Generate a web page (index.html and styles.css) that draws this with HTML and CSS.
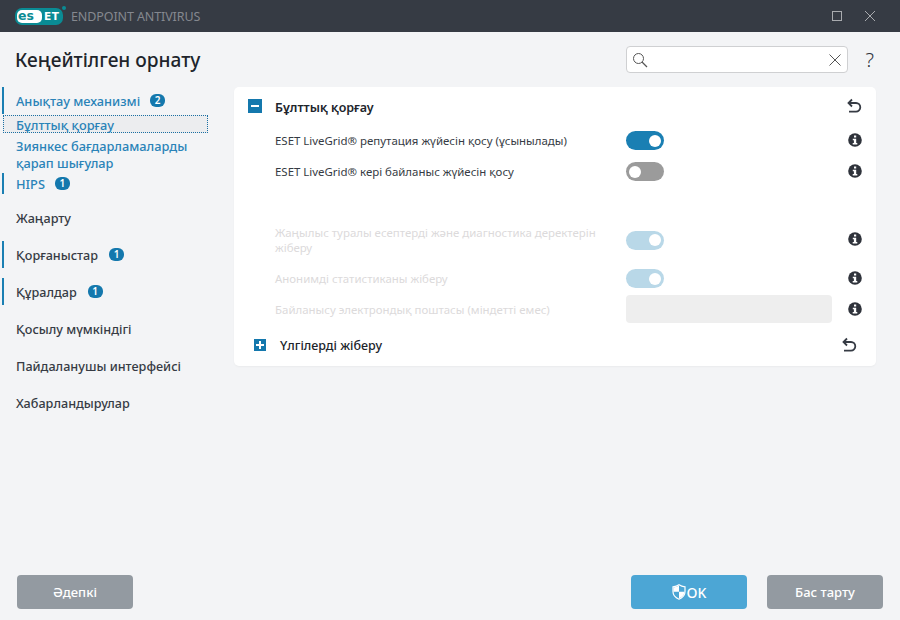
FILE: index.html
```html
<!DOCTYPE html>
<html lang="kk">
<head>
<meta charset="utf-8">
<title>ESET Endpoint Antivirus</title>
<link rel="stylesheet" href="styles.css">
</head>
<body>
<div class="app">
  <header class="titlebar">
    <div class="logo"><span class="logo-pill"><span class="logo-es">es</span><span class="logo-et">ET</span></span><span class="logo-dot"></span></div>
    <span class="product">ENDPOINT ANTIVIRUS</span>
    <div class="winctl">
      <svg class="winicon" viewBox="0 0 12 12"><rect x="1.500" y="1.500" width="9" height="9" fill="none" stroke="#a9abaf" stroke-width="1"/></svg>
      <svg class="winicon close" viewBox="0 0 12 12"><path d="M1 1l10 10M11 1L1 11" fill="none" stroke="#a9abaf" stroke-width="1"/></svg>
    </div>
  </header>
  <div class="pagehead">
    <h1 class="title">Кеңейтілген орнату</h1>
    <div class="search">
      <svg class="search-ic" viewBox="0 0 16 16"><circle cx="6.500" cy="6.500" r="5" fill="none" stroke="#555" stroke-width="1"/><path d="M10 10l5 5" stroke="#555" stroke-width="1.200"/></svg>
      <svg class="search-x" viewBox="0 0 12 12"><path d="M.5.5l11 11M11.500.5l-11 11" stroke="#555" stroke-width="1"/></svg>
    </div>
    <span class="help">?</span>
  </div>
  <main class="content">
    <nav class="side">
      <div class="nav-group">
        <a class="nav-head marked active">Анықтау механизмі <span class="badge">2</span></a>
        <a class="nav-sub selected">Бұлттық қорғау</a>
        <a class="nav-sub multi">Зиянкес бағдарламаларды қарап шығулар</a>
        <a class="nav-hips marked active">HIPS <span class="badge">1</span></a>
      </div>
      <a class="nav-head top">Жаңарту</a>
      <a class="nav-head top marked">Қорғаныстар <span class="badge">1</span></a>
      <a class="nav-head top marked">Құралдар <span class="badge">1</span></a>
      <a class="nav-head top">Қосылу мүмкіндігі</a>
      <a class="nav-head top">Пайдаланушы интерфейсі</a>
      <a class="nav-head top">Хабарландырулар</a>
    </nav>
    <section class="card">
      <div class="sec-head">
        <span class="tree minus"><span class="bar"></span></span>
        <h2 class="sec-title">Бұлттық қорғау</h2>
        <svg class="undo" viewBox="0 0 16 16"><path d="M5 1.500L1.500 5 5 8.500" fill="none" stroke="#363b44" stroke-width="1.800"/><path d="M2 5h7a4.300 4.300 0 0 1 0 8.600H2" fill="none" stroke="#363b44" stroke-width="1.800"/></svg>
      </div>

      <div class="row">
        <span class="label">ESET LiveGrid® репутация жүйесін қосу (ұсынылады)</span>
        <span class="control"><span class="toggle on"><span class="knob"></span></span></span>
        <svg class="info" viewBox="0 0 14 14"><circle cx="7" cy="7" r="6.800" fill="#2f333b"/><rect x="6" y="2.500" width="2.200" height="2" fill="#fff"/><path d="M4.800 5.700h3.400v4.200h1.100v1.500H4.700V9.900h1.200V7.200H4.800z" fill="#fff"/></svg>
      </div>
      <div class="row">
        <span class="label">ESET LiveGrid® кері байланыс жүйесін қосу</span>
        <span class="control"><span class="toggle off"><span class="knob"></span></span></span>
        <svg class="info" viewBox="0 0 14 14"><circle cx="7" cy="7" r="6.800" fill="#2f333b"/><rect x="6" y="2.500" width="2.200" height="2" fill="#fff"/><path d="M4.800 5.700h3.400v4.200h1.100v1.500H4.700V9.900h1.200V7.200H4.800z" fill="#fff"/></svg>
      </div>
      <div class="row tall disabled">
        <span class="label">Жаңылыс туралы есептерді және диагностика деректерін жіберу</span>
        <span class="control"><span class="toggle on"><span class="knob"></span></span></span>
        <svg class="info" viewBox="0 0 14 14"><circle cx="7" cy="7" r="6.800" fill="#2f333b"/><rect x="6" y="2.500" width="2.200" height="2" fill="#fff"/><path d="M4.800 5.700h3.400v4.200h1.100v1.500H4.700V9.900h1.200V7.200H4.800z" fill="#fff"/></svg>
      </div>
      <div class="row anon disabled">
        <span class="label">Анонимді статистиканы жіберу</span>
        <span class="control"><span class="toggle on"><span class="knob"></span></span></span>
        <svg class="info" viewBox="0 0 14 14"><circle cx="7" cy="7" r="6.800" fill="#2f333b"/><rect x="6" y="2.500" width="2.200" height="2" fill="#fff"/><path d="M4.800 5.700h3.400v4.200h1.100v1.500H4.700V9.900h1.200V7.200H4.800z" fill="#fff"/></svg>
      </div>
      <div class="row mail disabled">
        <span class="label">Байланысу электрондық поштасы (міндетті емес)</span>
        <span class="control"><span class="textbox"></span></span>
        <svg class="info" viewBox="0 0 14 14"><circle cx="7" cy="7" r="6.800" fill="#2f333b"/><rect x="6" y="2.500" width="2.200" height="2" fill="#fff"/><path d="M4.800 5.700h3.400v4.200h1.100v1.500H4.700V9.900h1.200V7.200H4.800z" fill="#fff"/></svg>
      </div>

      <div class="sub-head">
        <span class="tree plus"><span class="bar"></span><span class="bar vert"></span></span>
        <h3 class="sub-title">Үлгілерді жіберу</h3>
        <svg class="undo" viewBox="0 0 16 16"><path d="M5 1.500L1.500 5 5 8.500" fill="none" stroke="#363b44" stroke-width="1.800"/><path d="M2 5h7a4.300 4.300 0 0 1 0 8.600H2" fill="none" stroke="#363b44" stroke-width="1.800"/></svg>
      </div>
    </section>
  </main>
  <footer class="footer">
    <button class="btn grey">Әдепкі</button>
    <span class="spacer"></span>
    <button class="btn blue"><svg class="shield" viewBox="0 0 14 16"><path d="M7 .8c1.800 1.300 3.800 1.900 6 2v5c0 3.500-2.600 6-6 7.400C3.600 13.800 1 11.300 1 7.800v-5c2.200-.1 4.200-.7 6-2z" fill="none" stroke="#fff" stroke-width="1.200"/><path d="M7 1.500v6.300H1.500v-4.500C3.200 3.200 5.300 2.600 7 1.500zM7 7.800h5.500c0 3-2.200 5.400-5.500 6.600z" fill="#fff"/></svg>OK</button>
    <button class="btn grey">Бас тарту</button>
  </footer>
</div>
</body>
</html>
```
FILE: styles.css
```css
* { box-sizing: border-box; }
html, body { margin: 0; padding: 0; }
body { font-family: "Noto Sans", "Open Sans", sans-serif; background: #f3f4f6; color: #363b44; }
.app { width: 900px; height: 620px; display: flex; flex-direction: column; overflow: hidden; }

.titlebar { height: 32px; flex: none; background: #363b44; display: flex; align-items: center; padding-left: 15px; }
.logo { display: flex; align-items: flex-start; width: 56px; height: 18px; margin-top: 1px; }
.logo-pill { width: 48px; height: 17px; background: #0a8b94; border-radius: 7px; display: flex; align-items: center; padding-left: 2px; font-family: "DejaVu Sans", sans-serif; font-weight: 700; font-size: 13px; line-height: 13px; }
.logo-es { background: #fff; color: #0a8b94; border-radius: 5px; height: 13px; width: 25px; padding-left: 1px; letter-spacing: 0; line-height: 12px; white-space: nowrap; font-size: 12.500px; }
.logo-et { color: #fff; font-size: 10.500px; margin-left: 2px; letter-spacing: .5px; white-space: nowrap; }
.logo-dot { width: 4px; height: 4px; border-radius: 50%; background: #0a8b94; margin-left: -1px; margin-top: -2px; }
.product { font-size: 12.500px; color: #85888f; letter-spacing: -.1px; }
.winctl { margin-left: auto; display: flex; align-items: center; gap: 21px; padding-right: 24px; }
.winicon { width: 12px; height: 12px; display: block; }

.pagehead { height: 55px; flex: none; display: flex; align-items: center; padding: 0 21px 0 15px; }
.title { margin: 0; font-size: 19.100px; font-weight: 500; color: #20242b; }
.search { margin-left: auto; width: 222px; height: 27px; background: #fff; border: 1px solid #cfd0d2; border-radius: 4px; display: flex; align-items: center; justify-content: space-between; padding: 0 6px 0 5px; }
.search-ic { width: 16px; height: 16px; }
.search-x { width: 12px; height: 12px; }
.help { width: 31px; text-align: right; font-size: 20px; font-weight: 300; color: #2f333b; padding-right: 5px; line-height: 24px; }

.content { flex: 1; display: flex; align-items: flex-start; min-height: 0; }
.side { width: 234px; flex: none; display: flex; flex-direction: column; padding-left: 2px; font-size: 12.800px; }
.nav-group { display: flex; flex-direction: column; }
.nav-head { display: flex; align-items: center; gap: 10px; padding-left: 12px; height: 27px; font-weight: 500; color: #363b44; }
.nav-head.active { color: #2a83b8; }
.nav-head.top { margin-bottom: 10px; font-size: 12.650px; gap: 11px; }
.marked { border-left: 2px solid #1a7fb3; }
.nav-head:not(.marked) { padding-left: 14px; }
.nav-group .nav-head { margin-bottom: 1px; }
.nav-sub { display: block; padding-left: 13px; line-height: 16px; color: #2a83b8; font-weight: 500; margin-left: 1px; width: 204px; }
.selected { height: 18px; background: #ecedef; border: 1px dotted #1a6fa3; padding-left: 12px; padding-top: 1px; margin-bottom: 5px; width: 205px; }
.multi { margin-bottom: 1px; width: 190px; line-height: 17px; }
.nav-hips { display: flex; align-items: center; gap: 10px; padding-left: 12px; height: 21px; margin-bottom: 10px; color: #2a83b8; font-weight: 500; }
.badge { background: #1478ad; color: #fff; font-size: 10px; font-weight: 600; min-width: 15px; height: 13px; line-height: 13px; border-radius: 6px; text-align: center; }

.card { width: 642px; flex: none; background: #fff; border-radius: 5px; box-shadow: 0 1px 2px rgba(0,0,0,.04); padding-bottom: 7px; }
.sec-head { height: 38px; display: flex; align-items: center; padding: 0 13px 0 14px; }
.sec-title { margin: 2px 0 0 13px; font-size: 12.500px; font-weight: 600; color: #20242b; flex: 1; }
.tree { display: flex; align-items: center; justify-content: center; background: #1478ad; position: relative; flex: none; }
.minus { width: 14px; height: 14px; }
.plus { width: 12px; height: 12px; }
.bar { width: 8px; height: 2px; background: #fff; }
.bar.vert { position: absolute; width: 2px; height: 8px; }
.undo { width: 16px; height: 16px; flex: none; }

.row { display: grid; grid-template-columns: 351px 206px 14px; align-items: center; min-height: 31px; padding-left: 41px; font-size: 11.450px; color: #363b44; }
.label { padding-right: 14px; line-height: 15px; }
.control { display: flex; align-items: center; }
.info { width: 14px; height: 14px; margin: 0 0 2px 16px; display: block; }
.tall { min-height: 38px; margin-top: 34px; }
.anon { margin-top: 4px; }
.mail { margin-top: 1px; min-height: 28px; }
.mail .info { margin-bottom: 0; }
.disabled .label { color: #dcdadb; }
.toggle { width: 38px; height: 19px; border-radius: 10px; display: flex; align-items: center; padding: 0 3px; }
.toggle.on { background: #1a7fb3; justify-content: flex-end; }
.toggle.off { background: #9b9b9b; }
.knob { width: 12px; height: 12px; border-radius: 50%; background: #fff; }
.disabled .toggle.on { background: #b9d8e8; }
.textbox { width: 206px; height: 28px; background: #eeeeee; border-radius: 4px; display: block; }

.sub-head { height: 28px; margin-top: 8px; display: flex; align-items: center; padding: 0 18px 0 20px; }
.sub-title { margin: 0 0 0 14px; font-size: 12.500px; font-weight: 500; color: #20242b; flex: 1; }

.footer { height: 45px; flex: none; display: flex; align-items: flex-start; gap: 20px; padding: 0 17px; }
.spacer { flex: 1; }
.btn { width: 116px; height: 34px; border: 0; border-radius: 4px; color: #fff; font-family: inherit; font-size: 13px; font-weight: 500; display: flex; align-items: center; justify-content: center; padding: 0; }
.grey { background: #939aa1; }
.blue { background: #4ca6d5; font-size: 14px; }
.shield { width: 14px; height: 16px; margin-right: 1px; }
```
